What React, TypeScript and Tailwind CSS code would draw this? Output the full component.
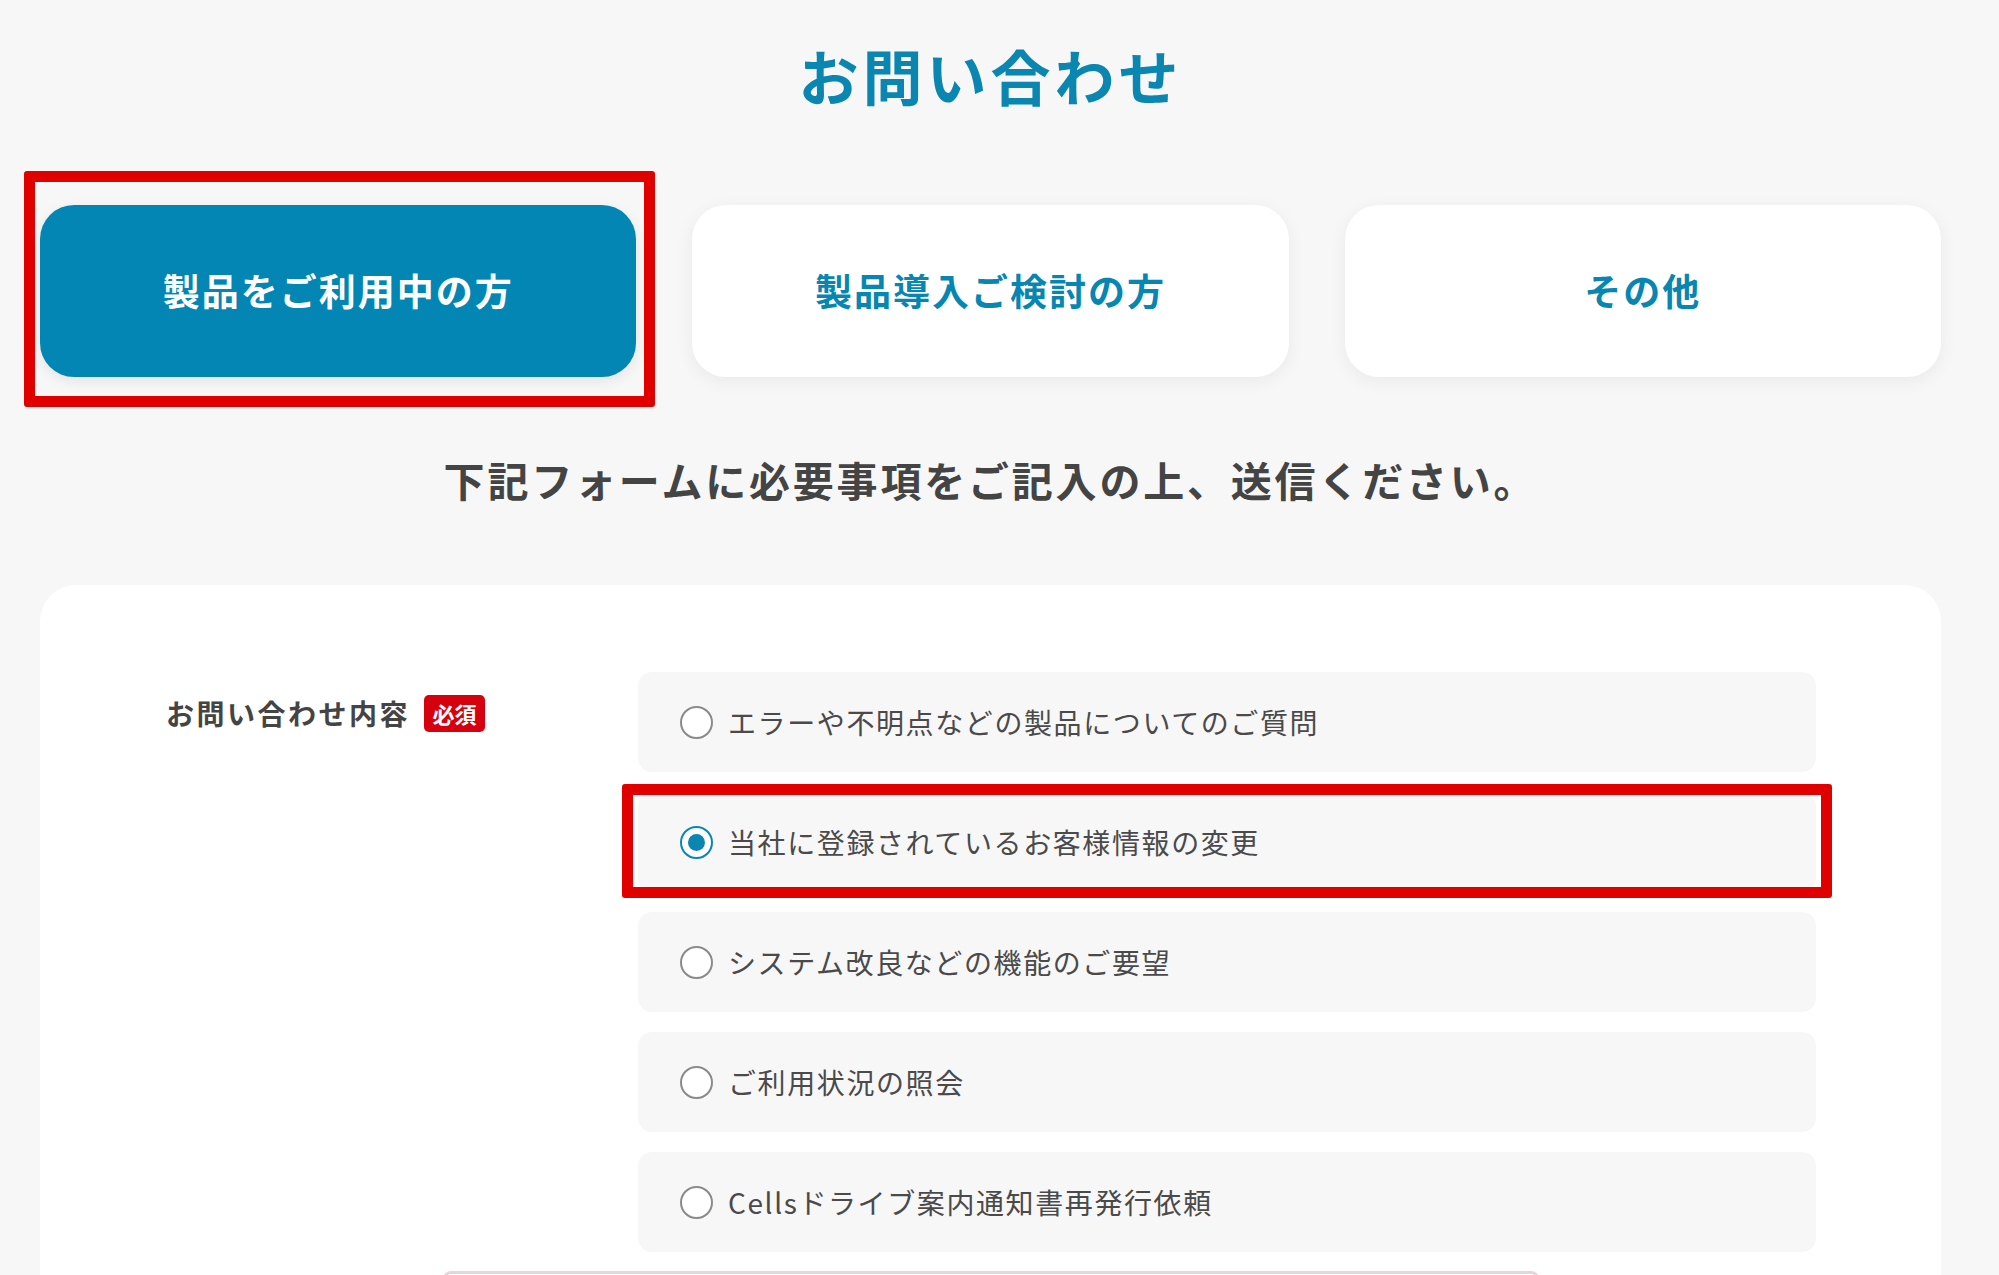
import React from 'react';

const tabs = [
  { label: '製品をご利用中の方', active: true },
  { label: '製品導入ご検討の方', active: false },
  { label: 'その他', active: false },
];

const options = [
  'エラーや不明点などの製品についてのご質問',
  '当社に登録されているお客様情報の変更',
  'システム改良などの機能のご要望',
  'ご利用状況の照会',
  'Cellsドライブ案内通知書再発行依頼',
];

export default function App() {
  const selected = 1;

  return (
    <div
      className="min-h-screen bg-[#f7f7f7] overflow-hidden"
      style={{ fontFamily: '"Noto Sans CJK JP", "Noto Sans", sans-serif' }}
    >
      <div className="w-[1901px] ml-[40px] flex flex-col">
        {/* Title */}
        <div className="h-[150px] flex items-center justify-center">
          <h1 className="text-[60px] font-bold tracking-[4px] text-[#0a86b1] leading-none">お問い合わせ</h1>
        </div>

        {/* Tabs */}
        <div className="mt-[55px] flex gap-[56px]">
          {tabs.map((t) => (
            <div key={t.label} className="relative flex-1">
              <button
                className={
                  t.active
                    ? 'w-full h-[172px] rounded-[34px] bg-[#0386b3] text-white text-[37px] font-bold tracking-[2px] shadow-[0_4px_14px_rgba(0,0,0,0.08)]'
                    : 'w-full h-[172px] rounded-[34px] bg-white text-[#0786b1] text-[37px] font-bold tracking-[2px] shadow-[0_4px_18px_rgba(0,0,0,0.06)]'
                }
              >
                {t.label}
              </button>
              {t.active && (
                <div className="absolute -left-[16px] -right-[19px] -top-[34px] -bottom-[30px] border-[11px] border-[#e00000] rounded-[3px] pointer-events-none" />
              )}
            </div>
          ))}
        </div>

        {/* Lead */}
        <p className="mt-[72px] h-[60px] leading-[60px] text-center text-[41px] font-bold tracking-[2.8px] text-[#444444]">
          下記フォームに必要事項をご記入の上、送信ください。
        </p>

        {/* Form card */}
        <div className="mt-[76px] bg-white rounded-[36px] pt-[87px] pl-[126px] pr-[125px] pb-[200px]">
          <div className="flex">
            <div className="w-[472px] shrink-0">
              <div className="mt-[21px] h-[40px] flex items-center gap-[14px]">
                <span className="text-[28px] font-bold tracking-[2.5px] text-[#444444]">お問い合わせ内容</span>
                <span className="h-[37px] w-[61px] rounded-[5px] bg-[#d7000f] text-white text-[22px] font-bold flex items-center justify-center">
                  必須
                </span>
              </div>
            </div>

            <div className="flex-1 flex flex-col gap-[20px]">
              {options.map((o, i) => (
                <label key={o} className="relative h-[100px] rounded-[14px] bg-[#f7f7f7] flex items-center pl-[42px] gap-[15px]">
                  {i === selected ? (
                    <span className="w-[33px] h-[33px] rounded-full border-2 border-[#0a86b1] bg-white flex items-center justify-center shrink-0">
                      <span className="w-[17px] h-[17px] rounded-full bg-[#0a86b1]" />
                    </span>
                  ) : (
                    <span className="w-[33px] h-[33px] rounded-full border-2 border-[#8a8a8a] bg-white shrink-0" />
                  )}
                  <span className="text-[28px] tracking-[1.6px] text-[#4a4a4a]">{o}</span>
                  {i === selected && (
                    <div className="absolute -left-[16px] -right-[16px] -top-[8px] -bottom-[6px] border-[11px] border-[#e00000] rounded-[3px] pointer-events-none" />
                  )}
                </label>
              ))}
            </div>
          </div>

          <div className="mt-[19px] ml-[277px] w-[1096px] h-[60px] border-t-[3px] border-x-[3px] border-[#e6d6d9] rounded-t-[8px]" />
        </div>
      </div>
    </div>
  );
}
